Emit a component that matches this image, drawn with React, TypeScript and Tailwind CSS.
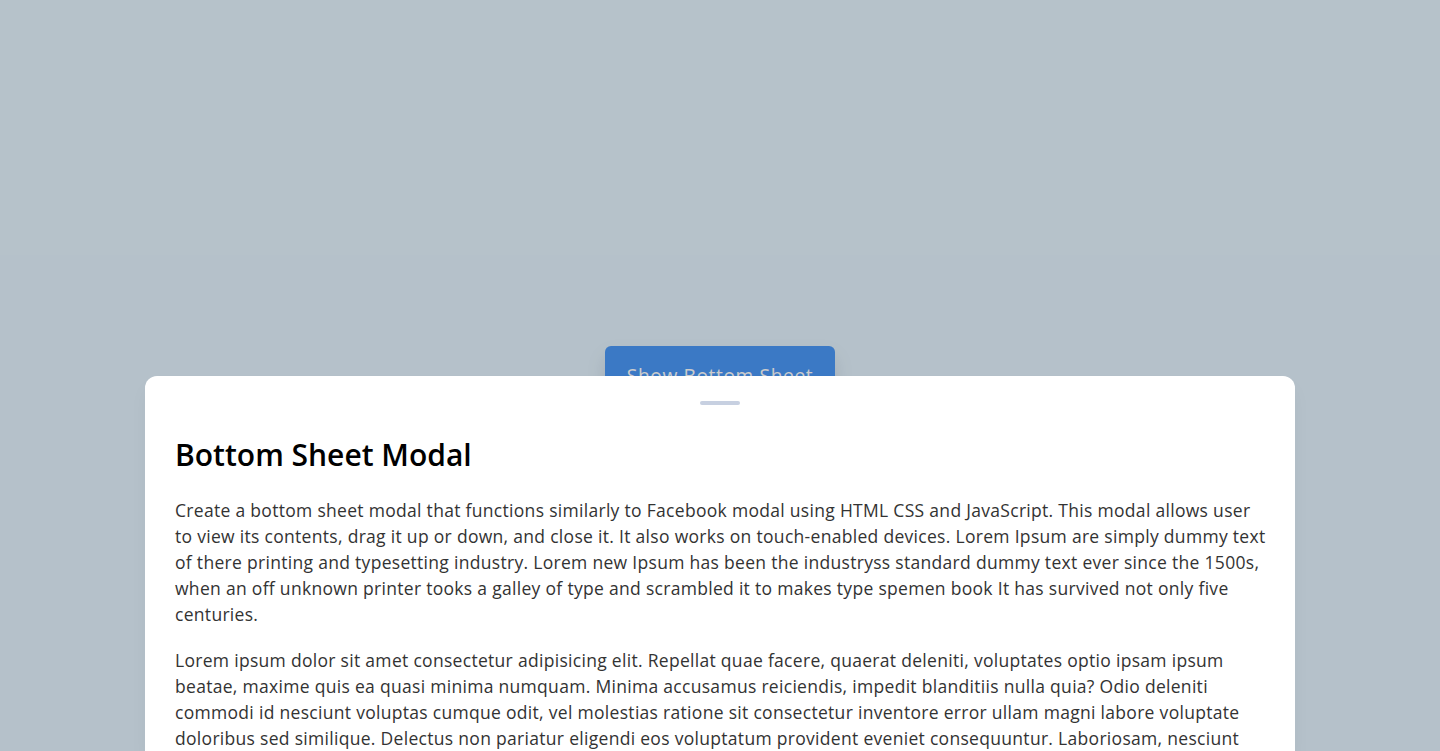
import React from "react";

const p1 = [
  "Create a bottom sheet modal that functions similarly to Facebook modal using HTML CSS and JavaScript. This modal allows user",
  "to view its contents, drag it up or down, and close it. It also works on touch-enabled devices. Lorem Ipsum are simply dummy text",
  "of there printing and typesetting industry. Lorem new Ipsum has been the industryss standard dummy text ever since the 1500s,",
  "when an off unknown printer tooks a galley of type and scrambled it to makes type spemen book It has survived not only five",
  "centuries.",
];
const p2 = [
  "Lorem ipsum dolor sit amet consectetur adipisicing elit. Repellat quae facere, quaerat deleniti, voluptates optio ipsam ipsum",
  "beatae, maxime quis ea quasi minima numquam. Minima accusamus reiciendis, impedit blanditiis nulla quia? Odio deleniti",
  "commodi id nesciunt voluptas cumque odit, vel molestias ratione sit consectetur inventore error ullam magni labore voluptate",
  "doloribus sed similique. Delectus non pariatur eligendi eos voluptatum provident eveniet consequuntur. Laboriosam, nesciunt",
];

export default function App() {
  return (
    <div className="relative h-screen w-full overflow-hidden bg-[#E3F2FD] font-['Open_Sans',sans-serif]">
      <div className="flex h-full items-center justify-center">
        <button className="rounded-md bg-[#4A98F7] px-[22px] py-[15px] text-[19.2px] leading-[29px] tracking-[0.6px] text-white shadow-[0_10px_20px_rgba(0,0,0,0.1)]">
          Show Bottom Sheet
        </button>
      </div>
      <div className="absolute inset-0 bg-black/20" />
      <div className="absolute inset-x-0 bottom-0 flex h-[50vh] justify-center">
        <div className="w-full max-w-[1150px] overflow-hidden rounded-t-xl bg-white px-[30px] pt-[10px] shadow-[0_10px_20px_rgba(0,0,0,0.03)]">
          <div className="flex justify-center">
            <div className="p-[15px]">
              <span className="block h-1 w-10 rounded-full bg-[#C7D0E1]" />
            </div>
          </div>
          <h2 className="mt-[16px] text-[30px] font-semibold leading-[38px] text-black">Bottom Sheet Modal</h2>
          <div className="mt-[23px] text-[17.5px] leading-[26px] tracking-[0.3px] text-[#333]">
            <p className="whitespace-nowrap">
              {p1.map((l, i) => (
                <span key={i} className="block">{l}</span>
              ))}
            </p>
            <p className="mt-5 whitespace-nowrap">
              {p2.map((l, i) => (
                <span key={i} className="block">{l}</span>
              ))}
            </p>
          </div>
        </div>
      </div>
    </div>
  );
}
